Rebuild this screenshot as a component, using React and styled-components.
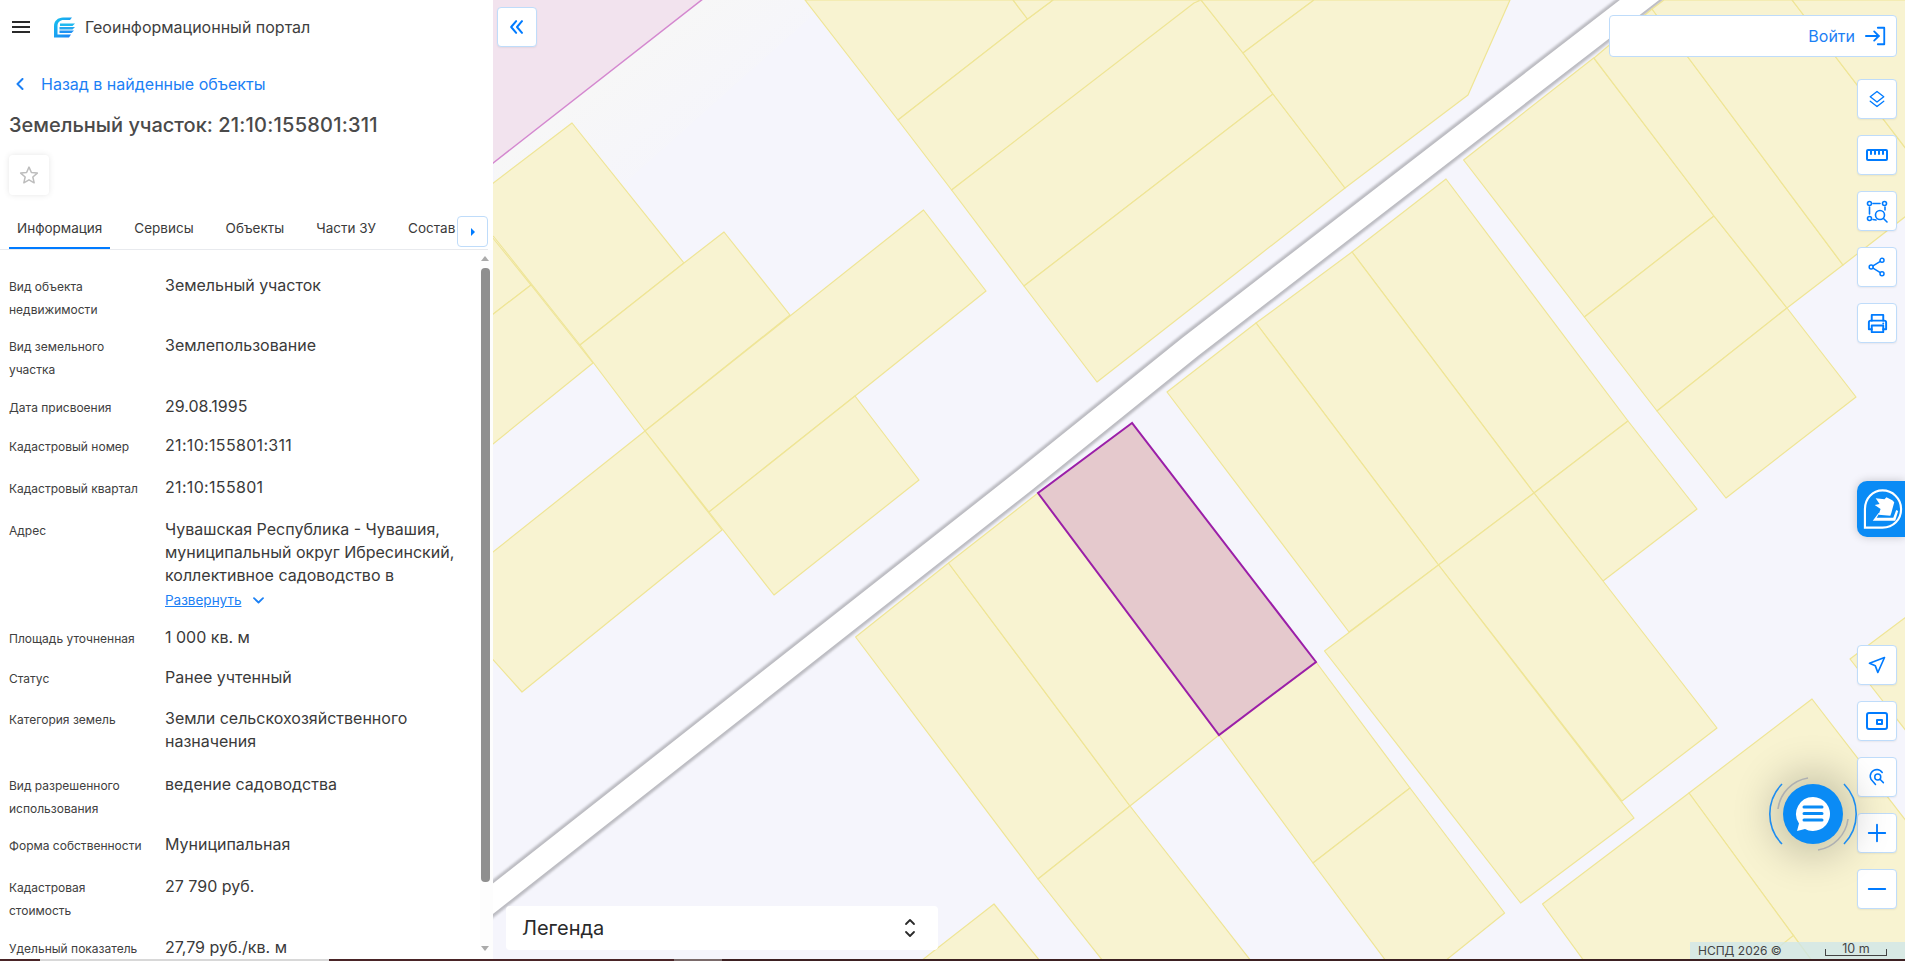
import React from "react";
import styled, { createGlobalStyle } from "styled-components";

const Global = createGlobalStyle`
  html, body { margin: 0; padding: 0; height: 100%; overflow: hidden; background: #fff; }
  body { font-family: Inter, "Noto Sans", sans-serif; }
  #root { height: 961px; }
  * { box-sizing: border-box; }
`;

const Shell = styled.div`
  display: flex; flex-direction: column; width: 1905px; height: 961px;
`;
const Main = styled.div`
  display: flex; height: 959px; overflow: hidden;
`;
const BottomStrip = styled.div`
  height: 2px; flex: none;
  background: linear-gradient(90deg, #4a2427 0 40px, #d8d8d8 40px 329px, #4a2427 329px 674px, #7a6a6a 674px 722px, #3d2022 722px);
`;

/* ---------- side panel ---------- */
const Panel = styled.aside`
  width: 493px; flex: none; display: flex; flex-direction: column; background: #fff; overflow: hidden;
`;
const Header = styled.header`
  display: flex; align-items: center; height: 54px; padding-left: 12px; flex: none;
`;
const Burger = styled.div`
  width: 18px; height: 12px; flex: none; display: flex; flex-direction: column; justify-content: space-between;
  & > i { display: block; height: 2px; background: #2a2a2a; }
`;
const Brand = styled.div`
  margin-left: 23px; display: flex; align-items: center; gap: 9px; font-size: 16px; color: #3e3e3e; line-height: 20px;
`;
const BackLink = styled.div`
  display: flex; align-items: center; height: 60px; padding-left: 16px; gap: 17px; color: #1b80f5; font-size: 16px; flex: none;
`;
const Title = styled.h1`
  margin: -3px 0 0; padding-left: 9px; font-size: 20px; line-height: 28px; font-weight: 500; color: #4a4a4a; flex: none; height: 44px;
`;
const TitleNumber = styled.span`
  letter-spacing: .23px;
`;
const StarButton = styled.div`
  margin-left: 9px; width: 40px; height: 40px; flex: none; display: flex; align-items: center; justify-content: center;
  border-radius: 4px; background: #fff; box-shadow: 0 0 6px rgba(0,0,0,.10);
`;
const Tabs = styled.nav`
  position: relative; margin-top: 17px; width: 488px; height: 38px; flex: none; display: flex; gap: 16px; padding-left: 9px;
  border-bottom: 1px solid #e8eaee; overflow: hidden;
`;
const Tab = styled.div`
  height: 37px; padding: 0 8px 3px; display: flex; align-items: center; font-size: 13.5px; color: #3b3b3b; flex: none;
  border-bottom: 2px solid ${p => (p.$active ? "#007bff" : "transparent")};
`;
const TabNext = styled.div`
  position: absolute; right: 0; top: 4px; width: 31px; height: 31px; display: flex; align-items: center; justify-content: center;
  background: #fff; border: 1px solid #bfdcfa; border-radius: 4px;
`;
const Body = styled.div`
  position: relative; flex: 1; overflow: hidden;
`;
const List = styled.div`
  padding: 24px 0 0 9px;
`;
const Row = styled.div`
  display: flex; height: ${p => p.$h}px;
`;
const Label = styled.div`
  width: 156px; flex: none; padding: 2px 21px 0 0; font-size: 12px; line-height: 22.5px; color: #404040;
`;
const Value = styled.div`
  width: 310px; flex: none; font-size: 16px; line-height: 23px; color: #3a3a3a;
  letter-spacing: ${p => (p.$number ? ".32px" : "normal")};
`;
const Expand = styled.div`
  display: flex; align-items: center; gap: 12px; margin-top: 3px; font-size: 13.5px; line-height: 20px; color: #1b80f5;
  & > span { text-decoration: underline; }
`;
const Track = styled.div`
  position: absolute; top: 0; bottom: 0; left: 480px; width: 13px; background: #fdfdfd;
`;
const Thumb = styled.div`
  position: absolute; left: 1px; top: 18px; width: 9px; height: 614px; border-radius: 4px; background: #8f8f8f;
`;
const ArrowUp = styled.div`
  position: absolute; left: 1px; top: 6px; width: 0; height: 0;
  border-left: 4.5px solid transparent; border-right: 4.5px solid transparent; border-bottom: 5px solid #aaa;
`;
const ArrowDown = styled.div`
  position: absolute; left: 1px; bottom: 8px; width: 0; height: 0;
  border-left: 4.5px solid transparent; border-right: 4.5px solid transparent; border-top: 5px solid #aaa;
`;

/* ---------- map ---------- */
const MapArea = styled.main`
  position: relative; flex: 1; background: #f5f5fc; overflow: hidden;
`;
const MapSvg = styled.svg`
  position: absolute; inset: 0; width: 100%; height: 100%; display: block;
`;
const Parcel = styled.polygon`
  fill: #f8f3d1; stroke: #efe596; stroke-width: 1.2; stroke-linejoin: round;
`;
const ParcelLine = styled.line`
  stroke: #efe596; stroke-width: 1.2;
`;
const RoadEdge = styled.polyline`
  fill: none; stroke: #bcbcc2; stroke-width: 30; stroke-linejoin: round; filter: blur(1.2px);
`;
const RoadCore = styled.polyline`
  fill: none; stroke: #ffffff; stroke-width: 24; stroke-linejoin: round; filter: blur(.6px);
`;
const OwnerZone = styled.polygon`
  fill: #f2e3ee; stroke: #d488cf; stroke-width: 1.5;
`;
const Selected = styled.polygon`
  fill: #e5c9cd; stroke: #9b1fa8; stroke-width: 2; stroke-linejoin: miter;
`;

const MapButton = styled.div`
  width: 40px; height: 40px; flex: none; display: flex; align-items: center; justify-content: center;
  background: #fff; border: 1px solid #bfdcfa; border-radius: 4px; box-shadow: 0 1px 2px rgba(0,0,0,.06);
`;
const CollapseSlot = styled.div`
  position: absolute; left: 4px; top: 7px;
`;
const Login = styled.div`
  position: absolute; top: 15px; left: 1116px; width: 288px; height: 42px; display: flex; align-items: center; justify-content: flex-end;
  gap: 10px; padding-right: 9px; background: #fff; border: 1px solid #bfdcfa; border-radius: 4px; font-size: 16px; color: #1b80f5;
`;
const ToolsTop = styled.div`
  position: absolute; top: 79px; left: 1364px; display: flex; flex-direction: column; gap: 16px;
`;
const ToolsBottom = styled.div`
  position: absolute; top: 645px; left: 1364px; display: flex; flex-direction: column; gap: 16px;
`;
const SideTab = styled.div`
  position: absolute; top: 481px; left: 1364px; width: 48px; height: 56px; display: flex; align-items: center; justify-content: flex-start; padding-left: 5px;
  background: #0a8bf5; border-radius: 10px 0 0 10px; box-shadow: 0 0 10px rgba(0,0,0,.2); overflow: hidden;
`;
const ChatWrap = styled.div`
  position: absolute; left: 1275px; top: 769px; width: 90px; height: 90px;
`;
const ChatCircle = styled.div`
  position: absolute; left: 15px; top: 15px; width: 60px; height: 60px; border-radius: 50%; background: #0a8bf5;
  box-shadow: 0 0 42px 12px rgba(0,0,0,.2); display: flex; align-items: center; justify-content: center;
`;
const ChatRings = styled.svg`
  position: absolute; inset: 0; width: 90px; height: 90px;
`;
const Legend = styled.div`
  position: absolute; left: 13px; top: 906px; width: 432px; height: 44px; display: flex; align-items: center; justify-content: space-between;
  padding: 0 22px 0 16px; background: #fff; border-radius: 4px; font-size: 20px; font-weight: 400; color: #2a2a2a;
`;
const Attribution = styled.div`
  position: absolute; right: 0; bottom: 0; width: 215px; height: 17px; display: flex; align-items: center; padding-left: 8px;
  background: rgba(205, 229, 233, .75); font-size: 12px; color: #444;
`;
const ScaleBar = styled.div`
  position: absolute; left: 135px; top: 0; width: 62px; height: 14px; text-align: center; font-size: 12.5px; line-height: 14px; color: #444;
  border-bottom: 1px solid #444;
  &::before, &::after { content: ""; position: absolute; bottom: 0; width: 1px; height: 6px; background: #444; }
  &::before { left: 0; }
  &::after { right: 0; }
`;

/* ---------- icons ---------- */
const B = "#007bff";
const Ic = ({ s = 24, children, sw = 2 }) => (
  <svg width={s} height={s} viewBox="0 0 24 24" fill="none" stroke={B} strokeWidth={sw} strokeLinecap="round" strokeLinejoin="round">{children}</svg>
);

const Logo = () => (
  <svg width="23" height="21" viewBox="0 0 23 21">
    <defs>
      <linearGradient id="lg" x1="0" y1="0" x2="1" y2="1"><stop offset="0" stopColor="#17c3ee" /><stop offset="1" stopColor="#1d7ff5" /></linearGradient>
    </defs>
    <path d="M10 .5H19L17 3H10.5C7 3 4.5 5.5 4.5 9V17.5H18L16 20.5H1V9C1 4 5 .5 10 .5Z" fill="url(#lg)" />
    <path d="M7 6.5H22L19.5 9H7Z" fill="#21b9ee" />
    <path d="M6.5 10H22L19.5 12.5H6.5Z" fill="#24a7f0" />
    <path d="M6.5 13.5H21L18.5 16H6.5Z" fill="#1f92f3" />
  </svg>
);

const MapDrawing = () => (
  <MapSvg viewBox="493 0 1412 959" preserveAspectRatio="none">
    <defs>
      <linearGradient id="haze" gradientUnits="userSpaceOnUse" x1="600" y1="80" x2="680" y2="180">
        <stop offset="0" stopColor="#f7f7f7" /><stop offset="1" stopColor="#f5f5fc" />
      </linearGradient>
    </defs>
    <polygon points="494,163 702,0 830,0 494,300" fill="url(#haze)" />
    <OwnerZone points="488,167 708,-5 488,-5" />

    <Parcel points="805,0 1013,0 1027.5,19 898,120" />
    <Parcel points="898,120 1027.5,19 1053,0 1200,0 951.6,190" />
    <Parcel points="1013,0 1053,0 1027.5,19" />
    <Parcel points="951.6,190 1194,3 1201,0 1243,53 1273,94 1024,286" />
    <Parcel points="1201,0 1314,0 1243,53" />
    <Parcel points="1024,286 1273,94 1345,188 1097,382" />
    <Parcel points="1243,53 1314,0 1510,0 1468,95 1345,188 1273,94" />

    <Parcel points="488,187 572,123 684,263 580,345 494,237 488,232" />
    <Parcel points="488,232 531,285 488,318" />
    <Parcel points="488,318 531,285 593,363 488,448" />
    <Parcel points="580,345 684,263 724,232 790,315 645,431" />
    <Parcel points="645,431 923.5,210 986,291 855,396 709,512" />
    <Parcel points="855,396 919,480 774,595 709,512" />
    <Parcel points="645,431 722,530 522,692 488,654 488,556" />

    <RoadEdge points="480,909 1025,480 1190,347 1655,-12" />
    <RoadCore points="480,909 1025,480 1190,347 1655,-12" />

    <Parcel points="948.5,563 1130,806 1038,879 855.6,637" />
    <Parcel points="948.5,563 1038,493 1219,735 1130,806" />
    <Parcel points="1038,879 1130,806 1251,961 1103,961" />
    <Parcel points="1219,735 1316,662 1410,788 1313,863" />
    <Parcel points="1313,863 1410,788 1504.6,913 1445,961 1386,961" />
    <Parcel points="994,904 1040,961 921,961" />

    <Parcel points="1446,179 1628,421 1534,493 1352,252" />
    <Parcel points="1352,252 1534,493 1438.5,565 1256,323" />
    <Parcel points="1256,323 1438.5,565 1349,632 1167,392" />
    <Parcel points="1534,493 1628,421 1697,509 1603,581" />
    <Parcel points="1438.5,565 1534,493 1603,581 1717,728 1622,801" />
    <Parcel points="1324.5,651 1438.5,565 1634,818 1520.6,903" />

    <Parcel points="1463.6,160 1593.6,58 1714,216 1584.4,317" />
    <Parcel points="1584.4,317 1714,216 1787,308 1657,411" />
    <Parcel points="1657,411 1787,308 1856,397 1726,498" />
    <Parcel points="1594,58 1652,9 1843,265 1787,308 1714,216" />
    <Parcel points="1652,9 1664,0 1792,0 1910,154 1910,213 1843,265" />
    <Parcel points="1792,0 1910,0 1910,154" />

    <Parcel points="1850,659 1910,614 1910,736" />
    <Parcel points="1689,793 1812,699 1910,826 1910,965 1815,965" />
    <Parcel points="1689,793 1815,965 1587,965 1542.5,904" />
    <ParcelLine x1="1794" y1="935" x2="1764" y2="959" />

    <Selected points="1132,423 1038,493 1219,735 1316,662" />
  </MapSvg>
);

const rows = [
  { h: 60, l: "Вид объекта недвижимости", v: "Земельный участок" },
  { h: 61, l: "Вид земельного участка", v: "Землепользование" },
  { h: 39, l: "Дата присвоения", v: "29.08.1995" },
  { h: 42, l: "Кадастровый номер", v: "21:10:155801:311", number: true },
  { h: 42, l: "Кадастровый квартал", v: "21:10:155801", number: true },
  { h: 108, l: "Адрес", v: "Чувашская Республика - Чувашия, муниципальный округ Ибресинский, коллективное садоводство в", more: true },
  { h: 40, l: "Площадь уточненная", v: "1 000 кв. м" },
  { h: 41, l: "Статус", v: "Ранее учтенный" },
  { h: 66, l: "Категория земель", v: "Земли сельскохозяйственного назначения" },
  { h: 60, l: "Вид разрешенного использования", v: "ведение садоводства" },
  { h: 42, l: "Форма собственности", v: "Муниципальная" },
  { h: 61, l: "Кадастровая стоимость", v: "27 790 руб." },
  { h: 40, l: "Удельный показатель", v: "27,79 руб./кв. м" },
];

export default function App() {
  return (
    <Shell>
      <Global />
      <Main>
        <Panel>
          <Header>
            <Burger><i /><i /><i /></Burger>
            <Brand><Logo />Геоинформационный портал</Brand>
          </Header>
          <BackLink>
            <svg width="8" height="12" viewBox="0 0 8 12" fill="none" stroke="#1b80f5" strokeWidth="2" strokeLinecap="round" strokeLinejoin="round"><path d="M6.5 1 1.5 6l5 5" /></svg>
            Назад в найденные объекты
          </BackLink>
          <Title>Земельный участок: <TitleNumber>21:10:155801:311</TitleNumber></Title>
          <StarButton>
            <svg width="20" height="20" viewBox="0 0 24 24" fill="none" stroke="#bdbdbd" strokeWidth="1.8" strokeLinejoin="round"><path d="M12 2.5 14.9 9l7.1.7-5.4 4.7 1.6 7L12 17.8l-6.2 3.6 1.6-7L2 9.7 9.1 9Z" /></svg>
          </StarButton>
          <Tabs>
            <Tab $active>Информация</Tab>
            <Tab>Сервисы</Tab>
            <Tab>Объекты</Tab>
            <Tab>Части ЗУ</Tab>
            <Tab>Состав</Tab>
            <TabNext>
              <svg width="6" height="8" viewBox="0 0 6 8"><path d="M1 0 5 4 1 8Z" fill={B} /></svg>
            </TabNext>
          </Tabs>
          <Body>
            <List>
              {rows.map(r => (
                <Row key={r.l} $h={r.h}>
                  <Label>{r.l}</Label>
                  <Value $number={r.number}>
                    {r.v}
                    {r.more && (
                      <Expand>
                        <span>Развернуть</span>
                        <svg width="11" height="7" viewBox="0 0 11 7" fill="none" stroke="#1b80f5" strokeWidth="1.8" strokeLinecap="round" strokeLinejoin="round"><path d="M1 1.2 5.5 5.5 10 1.2" /></svg>
                      </Expand>
                    )}
                  </Value>
                </Row>
              ))}
            </List>
            <Track>
              <ArrowUp />
              <Thumb />
              <ArrowDown />
            </Track>
          </Body>
        </Panel>

        <MapArea>
          <MapDrawing />
          <CollapseSlot>
            <MapButton>
              <Ic s={20} sw={2.4}><path d="M11 5 5 12l6 7" /><path d="M18 5l-6 7 6 7" /></Ic>
            </MapButton>
          </CollapseSlot>
          <Login>
            Войти
            <Ic s={22}><path d="M14 3h7v18h-7" /><path d="M1 12h14" /><path d="M10 7l5 5-5 5" /></Ic>
          </Login>
          <ToolsTop>
            <MapButton>
              <Ic s={18} sw={1.8}><path d="M12 2 21 9l-9 7-9-7Z" /><path d="M3 15l9 7 9-7" /></Ic>
            </MapButton>
            <MapButton>
              <Ic s={24}><rect x="2" y="7" width="20" height="10" rx="1" /><path d="M6 7v4M10 7v4M14 7v4M18 7v4" /></Ic>
            </MapButton>
            <MapButton>
              <Ic s={24} sw={1.6}>
                <circle cx="4.5" cy="4.5" r="2" /><circle cx="19.5" cy="4.5" r="2" /><circle cx="4.5" cy="19.5" r="2" />
                <path d="M8 4.5h7M4.5 8v7M20 8v3M8 20.5l3 .5" />
                <circle cx="15" cy="16" r="4.5" /><path d="M18.5 19.5 22 23" />
              </Ic>
            </MapButton>
            <MapButton>
              <Ic s={20} sw={1.8}><circle cx="18" cy="4" r="2.4" /><circle cx="5" cy="12" r="2.4" /><circle cx="18" cy="20" r="2.4" /><path d="M7.2 10.7 16 5.2M7.2 13.3l8.8 5.5" /></Ic>
            </MapButton>
            <MapButton>
              <Ic s={23}><path d="M6 9V3h12v6" /><path d="M6 18H3v-7a2 2 0 0 1 2-2h14a2 2 0 0 1 2 2v7h-3" /><rect x="6" y="14" width="12" height="7" /><path d="M18 12h.01" /></Ic>
            </MapButton>
          </ToolsTop>
          <SideTab>
            <svg width="44" height="42" viewBox="0 0 44 42" fill="none">
              <path d="M3 40V21C3 10 11 2 21 2s19 8 19 19-8 19-19 19Z" stroke="#fff" strokeWidth="2.2" />
              <path d="M14 10l9 1 2-2 6 3 2 2-3 11-1 3-12-1 2-6 -6-4 5 -1Z" fill="#fff" />
              <path d="M11 33l6-8h1l-3 5h17l3-8 2 1-3 10Z" fill="#fff" />
            </svg>
          </SideTab>
          <ToolsBottom>
            <MapButton>
              <Ic s={20}><path d="M21 3 3 10l7 3 3 8Z" /></Ic>
            </MapButton>
            <MapButton>
              <Ic s={24}><rect x="2" y="4" width="20" height="16" rx="2" /><rect x="12" y="11" width="5" height="4" /></Ic>
            </MapButton>
            <MapButton>
              <Ic s={18} sw={2}>
                <path d="M10 22 4 15a9 9 0 0 1 8-13 9 9 0 0 1 7 4" />
                <circle cx="13" cy="12" r="4" /><path d="M16 15l4.5 4.5" />
              </Ic>
            </MapButton>
            <MapButton>
              <Ic s={22} sw={2}><path d="M12 3v18M3 12h18" /></Ic>
            </MapButton>
            <MapButton>
              <Ic s={22} sw={2}><path d="M3 12h18" /></Ic>
            </MapButton>
          </ToolsBottom>
          <ChatWrap>
            <ChatCircle>
              <svg width="36" height="36" viewBox="0 0 36 36">
                <path d="M18 1a17 17 0 1 1-8 32l-8 2 2-7.5A17 17 0 0 1 18 1Z" fill="#fff" />
                <path d="M9 11h18M9 17.5h18M9 24h18" stroke="#0a8bf5" strokeWidth="3" strokeLinecap="round" />
              </svg>
            </ChatCircle>
            <ChatRings viewBox="0 0 90 90" fill="none">
              <path d="M14 15A43 43 0 0 0 14 75" stroke="#1e8df0" strokeWidth="1.6" />
              <path d="M76 15A43 43 0 0 1 76 75" stroke="#1e8df0" strokeWidth="1.6" />
              <path d="M10 40A36 36 0 0 1 40 9" stroke="#aeb0b2" strokeWidth="1.6" />
              <path d="M80 50A36 36 0 0 1 50 81" stroke="#aeb0b2" strokeWidth="1.6" />
            </ChatRings>
          </ChatWrap>
          <Legend>
            Легенда
            <svg width="12" height="20" viewBox="0 0 12 20" fill="none" stroke="#2a2a2a" strokeWidth="1.8" strokeLinecap="round" strokeLinejoin="round"><path d="M2 6l4-4 4 4M2 14l4 4 4-4" /></svg>
          </Legend>
          <Attribution>
            НСПД 2026 ©
            <ScaleBar>10 m</ScaleBar>
          </Attribution>
        </MapArea>
      </Main>
      <BottomStrip />
    </Shell>
  );
}
